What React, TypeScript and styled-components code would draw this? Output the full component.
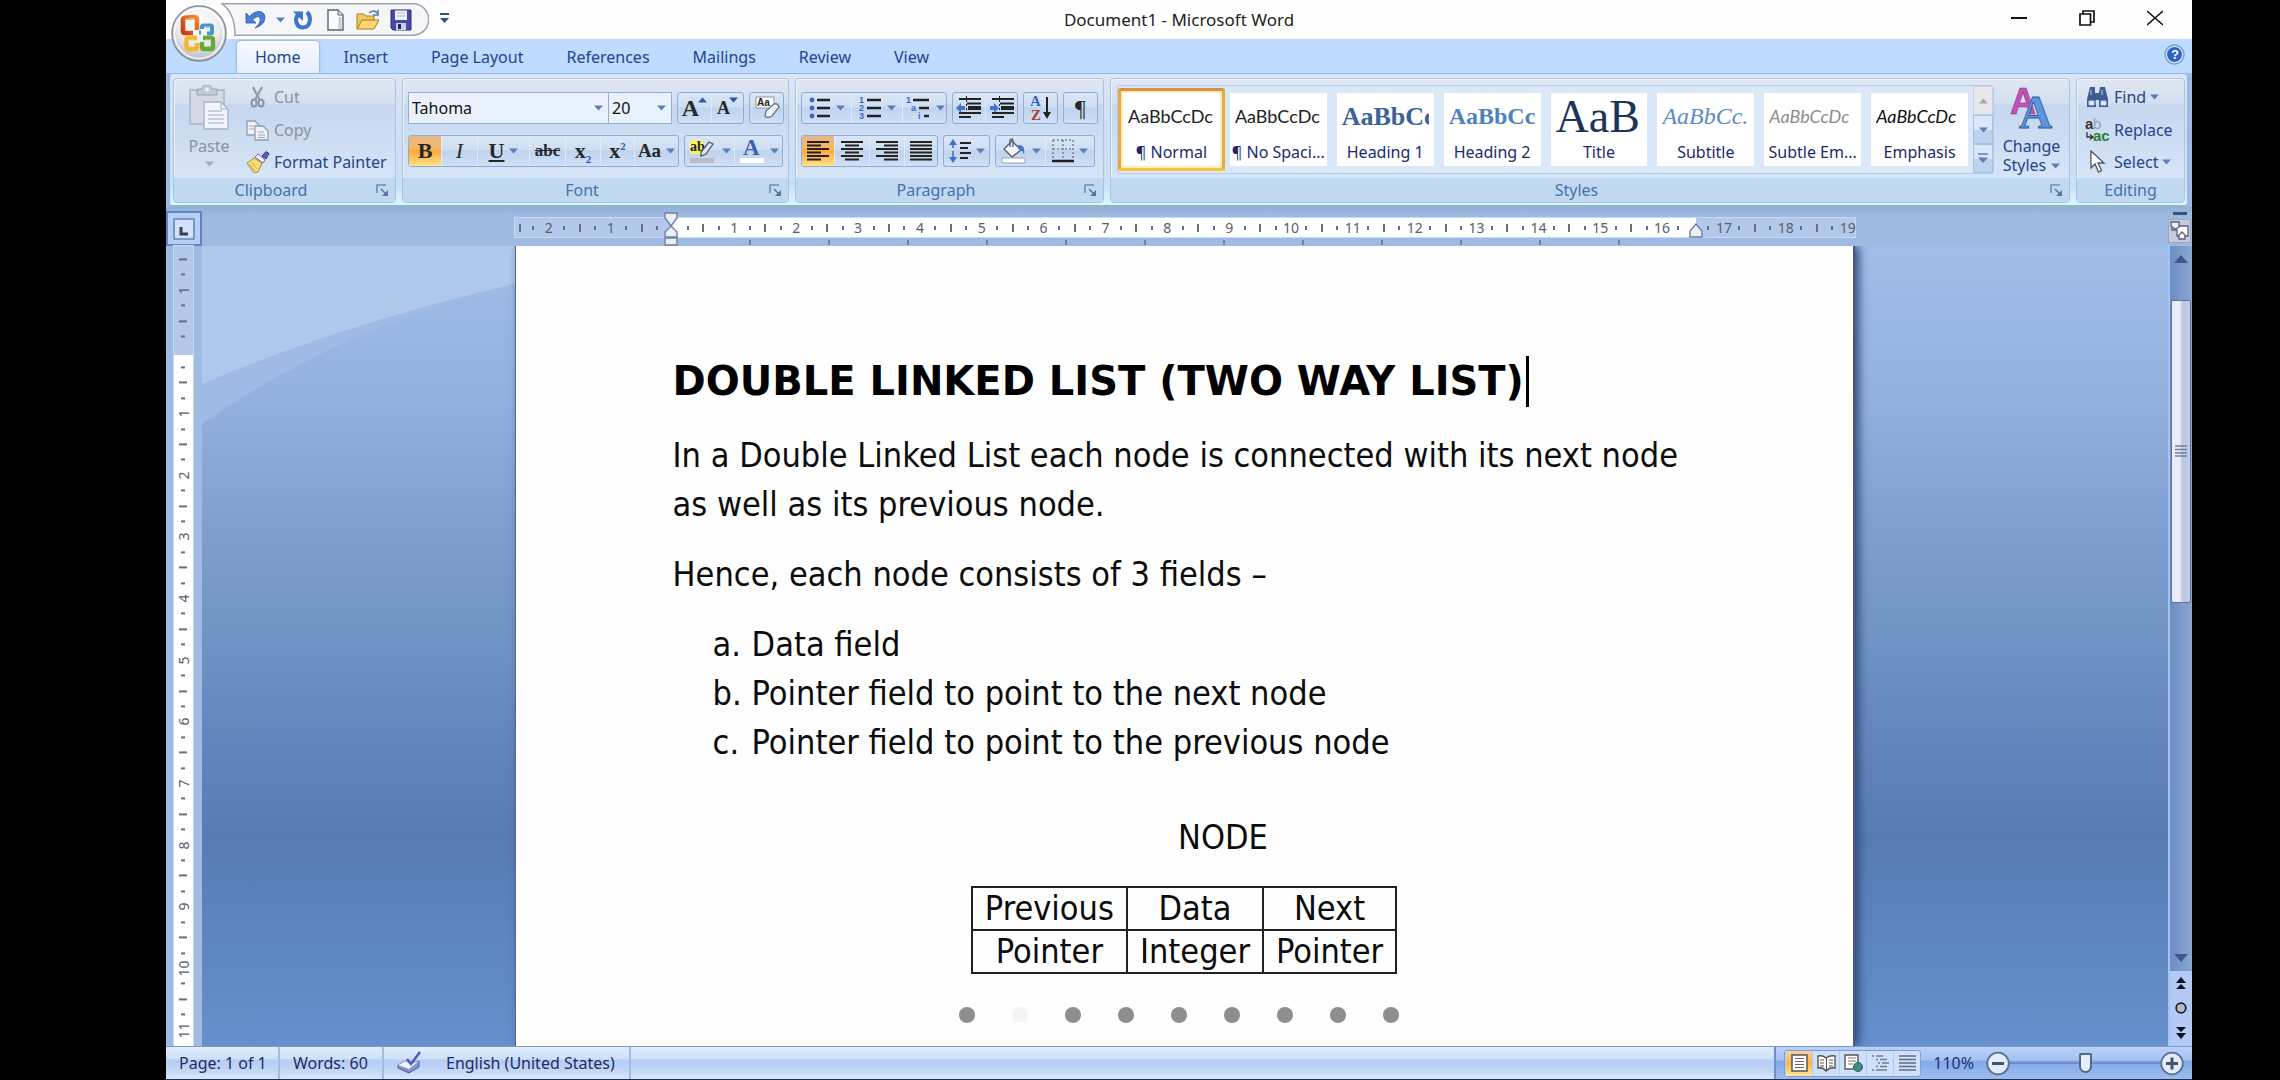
import React from "react";
import styled, { createGlobalStyle, css } from "styled-components";

const ui = `"Noto Sans", "Open Sans", sans-serif`;
const doc = `"DejaVu Sans Condensed", "DejaVu Sans", sans-serif`;
const serif = `"Liberation Serif", serif`;
const navy = "#23458c";
const line = "#8fadd6";

const GlobalStyle = createGlobalStyle`
  * { box-sizing: border-box; }
  body { margin: 0; background: #000; font-family: ${ui}; font-size: 16px; color: ${navy}; }
  button, select { font: inherit; color: inherit; background: none; border: 0; padding: 0; margin: 0; }
  svg { display: block; flex: none; }
`;

const AppWindow = styled.div`
  height: 100vh;
  margin: 0 88px 0 166px;
  display: flex;
  flex-direction: column;
  background: #9fbbe3;
  border-bottom: 1px solid #1d2f52;
  overflow: hidden;
`;

/* ---------- title bar and tabs ---------- */
const TitleBar = styled.header`
  position: relative;
  height: 39px;
  flex: none;
  display: grid;
  grid-template-columns: 1fr auto 1fr;
  background: #fefefe;
`;
const QuickArea = styled.div`
  display: flex;
  align-items: flex-start;
  padding: 3px 0 0 55px;
`;
const QuickBar = styled.div`
  position: relative;
  display: flex;
  align-items: center;
  width: 208px;
  height: 33px;
  padding-left: 24px;
`;
const QuickShape = styled.svg`
  position: absolute;
  left: 0;
  top: 0;
`;
const QuickButton = styled.button<{ $w: number }>`
  position: relative;
  width: ${(p) => p.$w}px;
  height: 28px;
  display: flex;
  align-items: center;
`;
const QuickMore = styled.button`
  padding: 10px 11px;
`;
const Title = styled.h1`
  margin: 0;
  font-size: 17px;
  font-weight: 400;
  line-height: 40px;
  color: #222;
`;
const Controls = styled.div`
  display: flex;
  justify-content: flex-end;
  padding-right: 3px;
`;
const ControlButton = styled.button`
  width: 68px;
  height: 36px;
  display: flex;
  align-items: center;
  justify-content: center;
`;
const OfficeButton = styled.button`
  position: absolute;
  left: 5px;
  top: 5px;
  z-index: 2;
`;
const TabStrip = styled.nav`
  flex: none;
  height: 34px;
  display: flex;
  align-items: flex-end;
  gap: 5px;
  padding-left: 70px;
  padding-right: 7px;
  background: #bfdbff;
`;
const Tab = styled.button<{ $active?: boolean }>`
  height: 33px;
  padding: 0 18px;
  line-height: 32px;
  border: 1px solid transparent;
  border-bottom: 0;
  border-radius: 5px 5px 0 0;
  ${(p) =>
    p.$active &&
    css`
      background: linear-gradient(#f8fbff, #e3edfa);
      border-color: #9dc0ea;
      box-shadow: 0 0 3px #8ec8e8;
    `}
`;
const HelpButton = styled.button`
  margin: 0 0 8px auto;
`;

/* ---------- ribbon ---------- */
const Ribbon = styled.section`
  flex: none;
  height: 134px;
  margin: 0 4px 0 3px;
  padding: 4px 2px 2px 3px;
  display: flex;
  gap: 6px;
  border: 1px solid #93b8e4;
  border-bottom: 2px solid #8fb6c6;
  border-radius: 4px;
  background: linear-gradient(#dbe6f5, #cfdff3 40%, #cbe0f6 85%, #dcf7ff);
`;
const Group = styled.section<{ $w?: number }>`
  ${(p) => (p.$w ? `width: ${p.$w}px; flex: none;` : "flex: 1; min-width: 0;")}
  display: flex;
  flex-direction: column;
  border: 1px solid #a9c3e2;
  border-radius: 4px;
  overflow: hidden;
  background: linear-gradient(#dfe7f3, #d3dff0 20%, #c6d7ee 21%, #d6e4f6 80%);
  box-shadow: inset 1px 1px 0 #eef4fb;
`;
const GroupBody = styled.div`
  flex: 1;
  min-height: 0;
  display: flex;
`;
const GroupFooter = styled.footer<{ $launcher: boolean }>`
  height: 24px;
  display: flex;
  align-items: center;
  padding-right: ${(p) => (p.$launcher ? 6 : 0)}px;
  background: #c1d8f1;
  color: #4a6fab;
`;
const GroupName = styled.span<{ $launcher: boolean }>`
  flex: 1;
  padding-right: ${(p) => (p.$launcher ? 8 : 0)}px;
  text-align: center;
  line-height: 24px;
`;
const PasteButton = styled.button`
  width: 70px;
  padding-top: 6px;
  display: flex;
  flex-direction: column;
  align-items: center;
  gap: 3px;
  color: #8d929b;
  line-height: 24px;
`;
const Stack = styled.div<{ $inset: number }>`
  padding: 2px 0 0 ${(p) => p.$inset}px;
  display: flex;
  flex-direction: column;
`;
const RowButton = styled.button<{ $off?: boolean }>`
  height: 32px;
  display: flex;
  align-items: center;
  gap: 4px;
  white-space: nowrap;
  color: ${(p) => (p.$off ? "#8d929b" : navy)};
  & + & { margin-top: 1px; }
`;
const Tools = styled.div`
  padding: 13px 0 0 5px;
  display: flex;
  flex-direction: column;
  gap: 11px;
`;
const ToolRow = styled.div`
  display: flex;
  gap: 5px;
`;
const ToolSet = styled.div`
  display: flex;
  height: 32px;
  border: 1px solid ${line};
  border-radius: 3px;
  background: linear-gradient(#dae6f6, #cfdef3 45%, #bfd3ee 50%, #cfe0f6);
`;
const Tool = styled.button<{ $w: number; $on?: boolean }>`
  width: ${(p) => p.$w}px;
  display: flex;
  align-items: center;
  justify-content: center;
  gap: 5px;
  color: #222;
  border-left: 1px solid #dfeafa;
  &:first-child { border-left: 0; }
  ${(p) => p.$on && "background: linear-gradient(#e9b58a, #f8b765 40%, #fca93d 50%, #ffe28a);"}
`;
const Glyph = styled.span<{ $size?: number; $color?: string; $italic?: boolean; $bold?: boolean; $line?: string }>`
  font-family: ${serif};
  font-size: ${(p) => p.$size ?? 22}px;
  line-height: 28px;
  font-weight: ${(p) => (p.$bold === false ? 400 : 700)};
  font-style: ${(p) => (p.$italic ? "italic" : "normal")};
  text-decoration: ${(p) => p.$line ?? "none"};
  color: ${(p) => p.$color ?? "#26282c"};
  sub, sup { font-size: 11px; line-height: 0; color: #2f57b0; }
`;
const Combo = styled.label<{ $w: number }>`
  position: relative;
  width: ${(p) => p.$w}px;
  height: 32px;
  & + & { margin-left: -6px; }
  svg { position: absolute; right: 6px; top: 13px; pointer-events: none; }
`;
const ComboSelect = styled.select`
  appearance: none;
  width: 100%;
  height: 100%;
  padding-left: 3px;
  border: 1px solid ${line};
  background: #e9f1fc;
  color: #111;
`;

/* ---------- styles gallery ---------- */
const Gallery = styled.div`
  flex: 1;
  min-width: 0;
  height: 89px;
  margin: 6px 0 0 6px;
  display: flex;
  border: 1px solid #b5cdea;
  border-radius: 3px;
  background: #dbe8f8;
`;
const StyleItem = styled.button<{ $on?: boolean }>`
  flex: 1;
  min-width: 0;
  height: 83px;
  margin-top: 2px;
  padding: 2px;
  border: 3px solid transparent;
  border-radius: 3px;
  ${(p) =>
    p.$on &&
    css`
      border-color: #d9923f #e9a93f #f6c53f #e9a93f;
      background: #ffedb5;
    `}
`;
const StyleCard = styled.span`
  display: flex;
  flex-direction: column;
  height: 100%;
  background: #fff;
  overflow: hidden;
`;
const Sample = styled.span<{ $size: number; $color: string; $serif?: boolean; $bold?: boolean; $italic?: boolean }>`
  height: 47px;
  margin: 0 5px;
  display: flex;
  align-items: center;
  line-height: 47px;
  overflow: hidden;
  white-space: nowrap;
  font-family: ${(p) => (p.$serif ? serif : `Lato, sans-serif`)};
  font-size: ${(p) => p.$size}px;
  font-weight: ${(p) => (p.$bold ? 700 : 400)};
  font-style: ${(p) => (p.$italic ? "italic" : "normal")};
  color: ${(p) => p.$color};
`;
const StyleName = styled.span`
  line-height: 24px;
  text-align: center;
  white-space: nowrap;
  color: #1b2a6b;
`;
const GalleryScroll = styled.div`
  width: 20px;
  display: flex;
  flex-direction: column;
`;
const GalleryArrow = styled.button<{ $off?: boolean }>`
  flex: 1;
  display: flex;
  align-items: center;
  justify-content: center;
  border: 1px solid ${(p) => (p.$off ? "#c9d3e2" : "#a8c2e6")};
  background: ${(p) => (p.$off ? "#e6e8ec" : "linear-gradient(#d9e7f9 50%, #bdd2ef 52%)")};
`;
const ChangeStyles = styled.button`
  width: 75px;
  padding-top: 6px;
  display: flex;
  flex-direction: column;
  align-items: center;
  line-height: 19px;
  svg:first-child { margin-bottom: 8px; }
`;
const Inline = styled.span`
  display: inline-flex;
  align-items: center;
  gap: 5px;
  svg:last-child { margin-bottom: 0; }
`;

/* ---------- rulers ---------- */
const RulerRow = styled.div`
  flex: none;
  height: 39px;
  display: flex;
  background: linear-gradient(#93b0da, #a0bbe2 25%);
`;
const TabSelector = styled.button`
  width: 36px;
  height: 35px;
  margin-top: 4px;
  display: flex;
  align-items: center;
  justify-content: center;
  border: 2px solid #5f84c8;
  background: #b9cff2;
`;
const RulerTrack = styled.div`
  flex: 1;
  display: flex;
  flex-direction: column;
  align-items: center;
  padding-top: 11px;
`;
const HRuler = styled.div`
  position: relative;
  width: 68.2%;
  height: 19px;
  display: grid;
  grid-template-columns: 11px repeat(86, minmax(0, 1fr));
  background: linear-gradient(90deg, #b3c8ea 11.7%, #fff 11.7%, #fff 88.1%, #b3c8ea 88.1%);
  box-shadow: 0 0 0 1px #c8d9f3;
`;
const VRuler = styled.div`
  width: 19px;
  margin-left: 8px;
  display: grid;
  grid-template-rows: 6px repeat(51, minmax(0, 1fr)) 8px;
  background: linear-gradient(#b3c8ea 109px, #fff 109px);
  box-shadow: 0 0 0 1px #c8d9f3;
`;
const VRulerPane = styled.div`
  width: 36px;
  display: flex;
  background: #a0bbe2;
`;
const Mark = styled.span<{ $vertical?: boolean }>`
  display: flex;
  align-items: center;
  justify-content: center;
  font-size: 14px;
  line-height: 15px;
  color: #55606f;
  writing-mode: ${(p) => (p.$vertical ? "vertical-rl" : "horizontal-tb")};
  rotate: ${(p) => (p.$vertical ? "180deg" : "0deg")};
`;
const Tick = styled.i<{ $long?: boolean; $vertical?: boolean }>`
  width: ${(p) => (p.$vertical && p.$long ? 8 : p.$vertical ? 4 : 2)}px;
  height: ${(p) => (p.$vertical ? 2 : p.$long ? 8 : 4)}px;
  background: #66707e;
`;
const Indent = styled.svg<{ $at: string; $top: number }>`
  position: absolute;
  left: ${(p) => p.$at};
  top: ${(p) => p.$top}px;
  margin-left: -7px;
`;
const TabTicks = styled.div`
  width: 68.2%;
  height: 9px;
  padding: 3px 0 0 234px;
  overflow: hidden;
  display: flex;
  gap: 77px;
  i { flex: none; width: 2px; height: 5px; background: #6f83a6; }
`;
const ScrollHead = styled.div`
  width: 24px;
  padding: 5px 1px 3px 0;
  display: flex;
  flex-direction: column;
  align-items: center;
  gap: 4px;
`;
const SplitHandle = styled.i`
  width: 14px;
  height: 3px;
  background: #3d4f78;
`;
const RulerToggle = styled.button`
  width: 23px;
  height: 24px;
  display: flex;
  align-items: center;
  justify-content: center;
  background: #c5cbdc;
  border: 1px solid #9aa7c4;
`;

/* ---------- workspace ---------- */
const Workspace = styled.div`
  flex: 1;
  min-height: 0;
  display: flex;
`;
const Canvas = styled.main`
  position: relative;
  flex: 1;
  display: flex;
  justify-content: center;
  overflow: hidden;
  background: linear-gradient(#a1bee8, #91b0df 20%, #7f9fd0 35%, #6f93c4 50%, #6385bc 62%, #587cb2 74%, #5b82bc 82%, #6690cc);
`;
const Swoosh = styled.svg`
  position: absolute;
  left: 0;
  top: 0;
`;
const Page = styled.article`
  position: relative;
  width: 68.2%;
  padding: 110px 158px 0 157px;
  background: #fefefe;
  border-left: 1px solid #5a6a86;
  border-right: 2px solid #4a5a76;
  box-shadow: 4px 0 9px #2f4a7a;
  color: #0c0c0c;
  font-family: ${doc};
  font-size: 34px;
  line-height: 49px;
  overflow-wrap: break-word;
`;
const DocHeading = styled.h2`
  display: flex;
  margin: 0 0 24px;
  font-family: "DejaVu Sans", sans-serif;
  font-size: 40px;
  line-height: 51px;
  font-weight: 700;
  white-space: nowrap;
  color: #000;
  &::after { content: ""; width: 3px; margin-left: 2px; background: #000; }
`;
const Para = styled.p`
  margin: 0 0 21px;
`;
const Fields = styled.ol`
  margin: 0 0 46px;
  padding: 0 0 0 40px;
  list-style: none;
  counter-reset: f;
  li { display: flex; counter-increment: f; }
  li::before { content: counter(f, lower-alpha) "."; width: 39px; }
`;
const NodeTitle = styled.p`
  margin: 0 0 24px;
  padding-left: 78px;
  text-align: center;
`;
const NodeTable = styled.table`
  margin: 0 auto 33px;
  border-collapse: collapse;
  td { height: 43px; padding: 0 12px; border: 2px solid #222; line-height: 41px; text-align: center; }
`;
const Dots = styled.div`
  display: flex;
  justify-content: center;
  gap: 37px;
  padding-right: 9px;
`;
const Dot = styled.i<{ $faint?: boolean }>`
  width: 16px;
  height: 16px;
  border-radius: 50%;
  background: ${(p) => (p.$faint ? "#f4f4f4" : "#8e8e8e")};
`;
const ScrollPane = styled.div`
  width: 24px;
  display: flex;
  flex-direction: column;
  align-items: center;
  border-left: 2px solid #a9c3ec;
  background: linear-gradient(90deg, #6b8ec6, #8ba5d0);
`;
const ScrollArrow = styled.button`
  height: 26px;
`;
const ScrollBefore = styled.div`
  flex: 28;
`;
const ScrollAfter = styled.div`
  flex: 343;
`;
const ScrollThumb = styled.div`
  flex: 301;
  width: 20px;
  display: flex;
  align-items: center;
  justify-content: center;
  border: 1px solid #5c739f;
  border-radius: 2px;
  background: linear-gradient(90deg, #e9edf8 45%, #bcc9e0 55%, #c5cbe2);
`;
const BrowseButtons = styled.div`
  width: 100%;
  height: 75px;
  display: flex;
  flex-direction: column;
  align-items: center;
  justify-content: space-around;
  background: #b4c9f5;
`;

/* ---------- status bar ---------- */
const StatusBar = styled.footer`
  flex: none;
  height: 33px;
  display: flex;
  border-top: 1px solid #7f98c6;
  background: linear-gradient(#e2edfd, #cfe0fb 36%, #b4cdf4 42%, #c3d8f8 75%, #d8e8fd);
  color: #1d2c5e;
`;
const StatusItem = styled.button<{ $w: number }>`
  width: ${(p) => p.$w}px;
  display: flex;
  align-items: center;
  padding-left: 13px;
  gap: 24px;
  border-right: 2px solid #a5bbe0;
  line-height: 28px;
`;
const StatusRight = styled.div`
  margin-left: auto;
  padding: 0 8px;
  display: flex;
  align-items: center;
  border-left: 2px solid #6d8fcb;
  background: linear-gradient(#b9d1f8, #a5c2f2 40%, #83a9e6 45%, #9dbdf0);
`;
const Views = styled.div`
  display: flex;
  height: 27px;
  border: 1px solid #7d9ed8;
  border-radius: 3px;
  background: #cfe0fa;
`;
const View = styled.button<{ $on?: boolean }>`
  width: 27px;
  display: flex;
  align-items: center;
  justify-content: center;
  border-left: 1px solid #b5cbee;
  ${(p) => p.$on && "background: linear-gradient(#f3d3a0, #fbb54b 50%, #ffe79c);"}
`;
const ZoomText = styled.button`
  margin: 0 12px;
  color: #1d3278;
`;
const ZoomSlider = styled.input`
  appearance: none;
  width: 150px;
  height: 24px;
  margin: 0;
  background: linear-gradient(#6c8dc9, #6c8dc9) center / 100% 2px no-repeat;
  &::-webkit-slider-thumb {
    appearance: none;
    width: 13px;
    height: 20px;
    background: #e4edfb;
    border: 2px solid #54688f;
    border-radius: 2px 2px 7px 7px;
  }
`;

/* ---------- drawings ---------- */
const Caret = ({ c = "#5b7fb8", up = false }: { c?: string; up?: boolean }) => (
  <svg width="9" height="6" viewBox="0 0 9 6"><path d={up ? "M0 5.5h9L4.500 .5z" : "M0 .5h9L4.500 5.500z"} fill={c} /></svg>
);
const Launcher = () => (
  <svg width="13" height="13" viewBox="0 0 13 13"><path d="M1 9V1h9" fill="none" stroke="#6d8bb8" strokeWidth="1.6" /><path d="M12 6v6H6z" fill="#56749f" /><path d="M5 5l5 5" stroke="#56749f" strokeWidth="1.500" /></svg>
);
const OfficeLogo = () => (
  <svg width="56" height="57" viewBox="0 0 56 57">
    <defs>
      <radialGradient id="orb" cx=".5" cy=".3" r=".75"><stop offset="0" stopColor="#fff" /><stop offset=".55" stopColor="#e9eaec" /><stop offset="1" stopColor="#a9afb8" /></radialGradient>
      <linearGradient id="red" x1="0" y1="1" x2="1" y2="0"><stop offset="0" stopColor="#c33a14" /><stop offset="1" stopColor="#f08a2c" /></linearGradient>
    </defs>
    <ellipse cx="28" cy="28.500" rx="27" ry="27.500" fill="url(#orb)" stroke="#878d97" strokeWidth="1.500" />
    <ellipse cx="28" cy="28.500" rx="24.500" ry="25" fill="none" stroke="#fff" strokeWidth="1.600" opacity=".8" />
    <g fill="none">
      <path d="M22 28H14q-2 0-2-2V15q0-2 2-2.300L23 12q3 0 3 2.500V25" stroke="url(#red)" strokeWidth="4.600" />
      <path d="M28 27.500h2M31 24v-2q0-1.500 1.500-1.500h7q1.500 0 1.500 1.500v5q0 1.500-1.500 1.500H36" stroke="#4796cf" strokeWidth="4" />
      <path d="M26 33h-8.500q-2 0-2 2v7q0 2 2 2H24q2 0 2-2v-4" stroke="#f3b72b" strokeWidth="4.400" />
      <path d="M31 37v5q0 2 2 2h7q2 0 2-2v-7q0-2-2-2h-8" stroke="#67a934" strokeWidth="4.400" />
    </g>
    <path d="M14 14.500l9-1.500M17 35h6M33 22h6M34 35h6" stroke="#fff" strokeWidth="1" opacity=".55" />
  </svg>
);
const Undo = () => (
  <svg width="22" height="22" viewBox="0 0 22 22"><path d="M1 4v10h10l-3.500-3.500Q13 5.500 15 9q1.500 4.500-5 10Q20 16 20 8q-1-6-7-5.500Q8 3 4.500 7.500z" fill="#4a7fd6" stroke="#2a56ac" strokeWidth=".8" /></svg>
);
const Redo = () => (
  <svg width="20" height="22" viewBox="0 0 20 22"><path d="M14 3q3 3 3 7.500Q16.500 18.500 10 18.500T3 11q0-4 3.500-7" fill="none" stroke="#3f74cf" strokeWidth="4" /><path d="M0 2.500h10V12z" fill="#3f74cf" /></svg>
);
const NewDoc = () => (
  <svg width="17" height="22" viewBox="0 0 17 22"><path d="M1 1h10l5 5v15H1z" fill="#fff" stroke="#5b6578" strokeWidth="1.400" /><path d="M11 1v5h5" fill="#d5dae4" stroke="#5b6578" /><path d="M13 8v12" stroke="#c5cad6" strokeWidth="3" /></svg>
);
const OpenFolder = () => (
  <svg width="25" height="22" viewBox="0 0 25 22"><path d="M1 20V5h7l2 2h8v4" fill="#f0c860" stroke="#a67a25" /><path d="M1 20L6 11h17l-5 9z" fill="#fbd671" stroke="#a67a25" /><path d="M13 4q5-4 8 0M22 1v5h-5" fill="none" stroke="#5a76ab" strokeWidth="1.600" /></svg>
);
const Save = () => (
  <svg width="22" height="22" viewBox="0 0 22 22"><path d="M1 1h20v20H3l-2-2z" fill="#4a49a6" stroke="#2d2c77" /><path d="M5 1.500h12V11H5z" fill="#eff2fb" /><path d="M6 14h10v7H6z" fill="#c9cfe6" /><path d="M8 15h3v5H8z" fill="#26265e" /><path d="M7 4h8M7 7h8" stroke="#b0b8d4" /></svg>
);
const PasteIcon = () => (
  <svg width="42" height="46" viewBox="0 0 42 46"><path d="M2 5h34v34H2z" fill="#d3dae6" stroke="#a9b5c8" strokeWidth="1.500" /><path d="M9 4h5q0-4 5-4t5 4h5v6H9z" fill="#c0cad9" stroke="#97a5bb" /><circle cx="19" cy="4.500" r="2" fill="#eef1f6" /><path d="M16 17h17l7 7v20H16z" fill="#f1f4fa" stroke="#a5b1c6" strokeWidth="1.300" /><path d="M33 17v7h7M20 26h14M20 30h16M20 34h16M20 38h16" fill="none" stroke="#b6c2d5" strokeWidth="1.300" /></svg>
);
const CutIcon = () => (
  <svg width="24" height="22" viewBox="0 0 24 22"><path d="M7 1l6.500 13M16 1L9 14" stroke="#929baa" strokeWidth="2.200" /><ellipse cx="8" cy="17" rx="2.500" ry="3.500" fill="none" stroke="#8b94a5" strokeWidth="2" /><ellipse cx="15" cy="17" rx="2.500" ry="3.500" fill="none" stroke="#8b94a5" strokeWidth="2" /></svg>
);
const CopyIcon = () => (
  <svg width="24" height="22" viewBox="0 0 24 22"><g fill="#eef1f7" stroke="#939cae" strokeWidth="1.300"><path d="M1 2h8l4 4v10H1z" /><path d="M9 7h8l5 5v9H9z" /></g><path d="M3 7h5M3 10h5M12 13h6M12 16h7M12 18.500h7" stroke="#9fa8ba" /></svg>
);
const PainterIcon = () => (
  <svg width="24" height="22" viewBox="0 0 24 22"><path d="M1 12l7-5 8 5-4 9-4 1z" fill="#f5dc7d" stroke="#a98b35" /><path d="M3 13l6 7M6 11l5 7" stroke="#cfae4b" /><path d="M9 6l8 6 2-3-7-6z" fill="#f7f7fb" stroke="#6d6f8a" /><path d="M16 5l4-4.500 3 2-3 5.500z" fill="#5462b4" stroke="#343d84" /></svg>
);
const Clear = () => (
  <svg width="26" height="26" viewBox="0 0 26 26"><path d="M2 2h18v11H2z" fill="#fff" stroke="#8793a8" /><text x="3" y="11" fontSize="10" fontWeight="700" fontFamily="Liberation Sans" fill="#222">Aa</text><path d="M12 16l8-7q4-1 5 3l-7 9q-5 3-7 0z" fill="#f0f2f8" stroke="#6f7a90" strokeWidth="1.400" /></svg>
);
const SmallCaret = styled.span`
  align-self: flex-start;
  margin: 3px 0 0 -6px;
`;
const GrowA = ({ up }: { up: boolean }) => (
  <Inline>
    <Glyph $size={up ? 24 : 18}>A</Glyph>
    <SmallCaret><Caret c="#2f57a8" up={up} /></SmallCaret>
  </Inline>
);
const Highlight = () => (
  <svg width="28" height="28" viewBox="0 0 28 28"><path d="M1 3h13v14H1z" fill="#f7f36a" /><text x="1" y="14" fontSize="14" fontWeight="700" fontFamily="Liberation Serif" fill="#222">ab</text><path d="M12 15L20 5l4 2-7 10-5 2z" fill="#dce3f0" stroke="#4d5768" strokeWidth="1.300" /><path d="M1 21h24v5H1z" fill="#b9bcc3" /></svg>
);
const FontColor = () => (
  <svg width="26" height="28" viewBox="0 0 26 28"><text x="4" y="18" fontSize="23" fontWeight="700" fontFamily="Liberation Serif" fill="#3c62aa">A</text><path d="M1 21h24v5H1z" fill="#fff" /></svg>
);
const Bullets = () => (
  <svg width="22" height="22" viewBox="0 0 22 22"><g fill="#3f66bd"><circle cx="3" cy="3" r="2.400" /><circle cx="3" cy="11" r="2.400" /><circle cx="3" cy="19" r="2.400" /></g><path d="M8 3h13M8 11h13M8 19h13" stroke="#222" strokeWidth="2.400" /></svg>
);
const Numbers = () => (
  <svg width="23" height="24" viewBox="0 0 23 24"><g fontSize="9" fontWeight="700" fontFamily="Liberation Sans" fill="#3f66bd"><text x="0" y="7">1</text><text x="0" y="15">2</text><text x="0" y="23">3</text></g><path d="M8 4h14M8 12h14M8 20h14" stroke="#222" strokeWidth="2.400" /></svg>
);
const Multi = () => (
  <svg width="26" height="24" viewBox="0 0 26 24"><g fontSize="9" fontWeight="700" fontFamily="Liberation Sans" fill="#3f66bd"><text x="1" y="7">1</text><text x="6" y="15">a</text><text x="13" y="23">i</text></g><path d="M8 4h16M14 12h10M19 20h5" stroke="#222" strokeWidth="2.400" /></svg>
);
const IndentIcon = ({ more }: { more?: boolean }) => (
  <svg width="26" height="24" viewBox="0 0 26 24"><path d="M3 3h22M11 7.500h14M3 17h22M3 21h12" stroke="#222" strokeWidth="2" /><path d="M12 10h13v4H12z" fill="#222" /><path d="M10.500 0v24" stroke="#222" strokeDasharray="2 2" /><path d={more ? "M1 10h4V7l5 5-5 5v-3H1z" : "M9 10H5V7l-5 5 5 5v-3h4z"} fill="#4474cf" /></svg>
);
const Sort = () => (
  <svg width="24" height="28" viewBox="0 0 24 28"><g fontSize="15" fontWeight="700" fontFamily="Liberation Serif"><text x="1" y="12" fill="#3f66bd">A</text><text x="2" y="26" fill="#b1372f">Z</text></g><path d="M18 3v18" stroke="#222" strokeWidth="2" /><path d="M14 18h8l-4 7z" fill="#222" /></svg>
);
const Align = ({ kind }: { kind: "l" | "c" | "r" | "j" }) => (
  <svg width="22" height="20" viewBox="0 0 22 20">
    {[22, 14, 22, 14, 22, 14].map((w, i) => {
      const n = kind === "j" ? 22 : w;
      const x = kind === "c" ? (22 - n) / 2 : kind === "r" ? 22 - n : 0;
      return <path key={i} d={`M${x} ${i * 3.5 + 1}h${n}`} stroke="#26231f" strokeWidth="2" />;
    })}
  </svg>
);
const Spacing = () => (
  <svg width="22" height="26" viewBox="0 0 22 26"><path d="M4 4v18" stroke="#3f6fcc" strokeWidth="1.600" strokeDasharray="6 3" /><path d="M0 7l4-6 4 6zM0 19l4 6 4-6z" fill="#3f6fcc" /><path d="M11 5h11M11 10h8M11 15h11M11 20h8" stroke="#222" strokeWidth="2" /></svg>
);
const Bucket = () => (
  <svg width="26" height="26" viewBox="0 0 26 26"><path d="M11 3l9 9-9 7-8-8z" fill="#f3f6fc" stroke="#555f73" strokeWidth="1.400" /><path d="M9 9V2q2-2 3 0v7" fill="none" stroke="#555f73" strokeWidth="1.300" /><path d="M17 7q8-1 6 10-1-5-5-5z" fill="#4474cf" /><path d="M1 20h23v5H1z" fill="#fff" stroke="#99a2b2" /></svg>
);
const Borders = () => (
  <svg width="22" height="24" viewBox="0 0 22 24"><path d="M1 1h20v18M1 1v18M11 1v18M1 10h20" fill="none" stroke="#7b8698" strokeWidth="1.600" strokeDasharray="2 2" /><path d="M0 22h22" stroke="#1f1f1f" strokeWidth="2.400" /></svg>
);
const ChangeIcon = () => (
  <svg width="44" height="44" viewBox="0 0 44 44"><text x="0" y="29" fontSize="36" fontWeight="700" fontFamily="Liberation Sans" fill="#c152b6" stroke="#8c2f86" strokeWidth=".6">A</text><text x="9" y="43" fontSize="46" fontWeight="700" fontFamily="Liberation Serif" fill="#5f95dc" stroke="#2f5aa4" strokeWidth=".8">A</text></svg>
);
const FindIcon = () => (
  <svg width="25" height="22" viewBox="0 0 25 22"><g fill="#3f5b93"><path d="M5 1h5v6l1 14H2V13zM15 1h5l3 12v8h-9V7z" /><path d="M10 7h5v7h-5z" /></g><path d="M4 15h5v4H4zM16 15h5v4h-5zM6 4v5M17 4v5" fill="#e3ecfb" stroke="#c3d2ec" /></svg>
);
const ReplaceIcon = () => (
  <svg width="25" height="26" viewBox="0 0 25 26"><g fontSize="15" fontWeight="700" fontFamily="Liberation Sans"><text x="0" y="12" fill="#333">a</text><text x="8" y="12" fill="#9aa1ac" fontWeight="400">b</text><text x="8" y="24" fill="#2e7d2e">ac</text></g><path d="M2 15v5h5M5 17.500l3 2.500-3 2.500" fill="none" stroke="#333" strokeWidth="1.300" /></svg>
);
const SelectIcon = () => (
  <svg width="25" height="24" viewBox="0 0 25 24"><path d="M6 1v17l4-4 3.500 8 3-1.500L13 13h6z" fill="#fff" stroke="#4c5465" strokeWidth="1.300" /></svg>
);
const Proof = () => (
  <svg width="25" height="24" viewBox="0 0 25 24"><path d="M1 14l8-4 4 3 9-3v6l-10 6L1 17z" fill="#8292c8" stroke="#4d5a94" /><path d="M1 14l8-4 4 3 9-3-10 8z" fill="#eef2fc" /><path d="M10 8l4 5 9-12" fill="none" stroke="#4a62b8" strokeWidth="2.600" /></svg>
);
const ViewIcon = ({ i }: { i: number }) => (
  <svg width="19" height="18" viewBox="0 0 19 18">
    {i === 0 && <><path d="M2 1h15v16H2z" fill="#fff" stroke="#555" strokeWidth="1.500" /><path d="M5 4.500h9M5 7.500h9M5 10.500h9M5 13.500h9" stroke="#666" /></>}
    {i === 1 && <><path d="M1 2q5-1 8 2 4-3 9-2v12q-5-1-9 3-3-4-8-3z" fill="#fff" stroke="#555" strokeWidth="1.400" /><path d="M9.500 4v12M3 6h4M3 9h4M12 6h4M12 9h4M3 12h4M12 12h4" stroke="#555" /></>}
    {i === 2 && <><path d="M1 1h13v14H1z" fill="#fff" stroke="#555" strokeWidth="1.400" /><path d="M4 4h8M4 7h8M4 10h5" stroke="#777" /><circle cx="14" cy="13" r="4.500" fill="#3c8f7d" stroke="#2a5a86" /></>}
    {i === 3 && <path d="M1 2h2M5 2h7M5 5.500h2M9 5.500h7M7 9h2M11 9h7M5 12.500h2M9 12.500h7M1 16h2M5 16h11" stroke="#737b8a" strokeWidth="1.700" />}
    {i === 4 && <path d="M1 2h17M1 5.500h17M1 9h17M1 12.500h17M1 16h17" stroke="#646c7c" strokeWidth="1.700" />}
  </svg>
);
const ZoomIcon = ({ plus }: { plus?: boolean }) => (
  <svg width="24" height="25" viewBox="0 0 24 25"><circle cx="12" cy="12.500" r="10.800" fill="#e3ecfa" stroke="#5d6f93" strokeWidth="1.800" /><path d={plus ? "M6 12.500h12M12 6.500v12" : "M6 12.500h12"} stroke="#46536f" strokeWidth="3" /></svg>
);
const PageJump = ({ down }: { down?: boolean }) => (
  <svg width="10" height="12" viewBox="0 0 10 12"><path d={down ? "M0 0h10L5 5zM0 6h10l-5 6z" : "M0 6h10L5 0zM0 12h10L5 7z"} fill="#0c1220" /></svg>
);

const styleItems = [
  { t: "AaBbCcDc", n: "¶ Normal", size: 18, color: "#222" },
  { t: "AaBbCcDc", n: "¶ No Spaci...", size: 18, color: "#222" },
  { t: "AaBbCc", n: "Heading 1", size: 26, color: "#3a6496", serif: true, bold: true },
  { t: "AaBbCc", n: "Heading 2", size: 24, color: "#4f81bd", serif: true, bold: true },
  { t: "AaB", n: "Title", size: 46, color: "#1c3557", serif: true },
  { t: "AaBbCc.", n: "Subtitle", size: 24, color: "#5b8ac4", serif: true, italic: true },
  { t: "AaBbCcDc", n: "Subtle Em...", size: 18, color: "#8c8c8c", italic: true },
  { t: "AaBbCcDc", n: "Emphasis", size: 18, color: "#111", italic: true },
];

const marks = (from: number, to: number, vertical?: boolean) =>
  Array.from({ length: to - from + 1 }, (_, i) => {
    const k = from + i;
    const q = ((k % 4) + 4) % 4;
    return (
      <Mark key={k} $vertical={vertical}>
        {k === 0 || (!vertical && k === 66) ? null : q === 0 ? Math.abs(k / 4) : <Tick $long={q === 2} $vertical={vertical} />}
      </Mark>
    );
  });

const Footer = ({ name, launcher = true }: { name: string; launcher?: boolean }) => (
  <GroupFooter $launcher={launcher}>
    <GroupName $launcher={launcher}>{name}</GroupName>
    {launcher && <button aria-label={`${name} options`}><Launcher /></button>}
  </GroupFooter>
);

export default function App() {
  return (
    <>
      <GlobalStyle />
      <AppWindow>
        <TitleBar>
          <OfficeButton aria-label="Office"><OfficeLogo /></OfficeButton>
          <QuickArea>
            <QuickBar>
              <QuickShape width="208" height="33" viewBox="0 0 208 33">
                <path d="M1 .8h191a15.500 15.500 0 0 1 0 31.400H14Q14 10 1 .8z" fill="#f5f6fa" stroke="#a0a3ab" strokeWidth="1.500" />
              </QuickShape>
              <QuickButton $w={31} aria-label="Undo"><Undo /></QuickButton>
              <QuickButton $w={17} aria-label="Undo list"><Caret /></QuickButton>
              <QuickButton $w={34} aria-label="Redo"><Redo /></QuickButton>
              <QuickButton $w={29} aria-label="New"><NewDoc /></QuickButton>
              <QuickButton $w={34} aria-label="Open"><OpenFolder /></QuickButton>
              <QuickButton $w={22} aria-label="Save"><Save /></QuickButton>
            </QuickBar>
            <QuickMore aria-label="Customize"><svg width="9" height="11" viewBox="0 0 9 11"><path d="M0 1h9" stroke="#34507f" strokeWidth="2" /><path d="M0 5h9l-4.500 5z" fill="#34507f" /></svg></QuickMore>
          </QuickArea>
          <Title>Document1 - Microsoft Word</Title>
          <Controls>
            <ControlButton aria-label="Minimize"><svg width="16" height="16" viewBox="0 0 16 16"><path d="M0 8h16" stroke="#111" strokeWidth="2" /></svg></ControlButton>
            <ControlButton aria-label="Restore"><svg width="16" height="16" viewBox="0 0 16 16"><path d="M1 4h10.500v11H1zM4 4V1h11v11h-3" fill="none" stroke="#111" strokeWidth="1.700" /></svg></ControlButton>
            <ControlButton aria-label="Close"><svg width="16" height="16" viewBox="0 0 16 16"><path d="M0 1l16 14M16 1L0 15" stroke="#111" strokeWidth="1.600" /></svg></ControlButton>
          </Controls>
        </TitleBar>
        <TabStrip>
          {["Home", "Insert", "Page Layout", "References", "Mailings", "Review", "View"].map((t, i) => (
            <Tab key={t} $active={i === 0}>{t}</Tab>
          ))}
          <HelpButton aria-label="Help">
            <svg width="21" height="21" viewBox="0 0 21 21"><circle cx="10.500" cy="10.500" r="9.500" fill="#dce9fc" stroke="#7c9cd0" strokeWidth="1.500" /><circle cx="10.500" cy="10.500" r="7.500" fill="#2f62c9" /><text x="7" y="15" fontSize="13" fontWeight="700" fontFamily="Liberation Sans" fill="#fff">?</text></svg>
          </HelpButton>
        </TabStrip>

        <Ribbon>
          <Group $w={223}>
            <GroupBody>
              <PasteButton><PasteIcon />Paste<Caret c="#a3abba" /></PasteButton>
              <Stack $inset={2}>
                <RowButton $off><CutIcon />Cut</RowButton>
                <RowButton $off><CopyIcon />Copy</RowButton>
                <RowButton><PainterIcon />Format Painter</RowButton>
              </Stack>
            </GroupBody>
            <Footer name="Clipboard" />
          </Group>

          <Group $w={387}>
            <GroupBody>
              <Tools>
                <ToolRow>
                  <Combo $w={201}><ComboSelect aria-label="Font" defaultValue="Tahoma"><option>Tahoma</option></ComboSelect><Caret /></Combo>
                  <Combo $w={64}><ComboSelect aria-label="Font size" defaultValue="20"><option>20</option></ComboSelect><Caret /></Combo>
                  <ToolSet>
                    <Tool $w={33} aria-label="Grow font"><GrowA up /></Tool>
                    <Tool $w={32} aria-label="Shrink font"><GrowA up={false} /></Tool>
                  </ToolSet>
                  <ToolSet><Tool $w={33} aria-label="Clear formatting"><Clear /></Tool></ToolSet>
                </ToolRow>
                <ToolRow>
                  <ToolSet>
                    <Tool $w={32} $on><Glyph>B</Glyph></Tool>
                    <Tool $w={36}><Glyph $italic $bold={false}>I</Glyph></Tool>
                    <Tool $w={52}><Glyph $line="underline">U</Glyph><Caret /></Tool>
                    <Tool $w={36}><Glyph $size={17} $line="line-through">abc</Glyph></Tool>
                    <Tool $w={35}><Glyph>x<sub>2</sub></Glyph></Tool>
                    <Tool $w={34}><Glyph>x<sup>2</sup></Glyph></Tool>
                    <Tool $w={44}><Glyph $size={19}>Aa</Glyph><Caret /></Tool>
                  </ToolSet>
                  <ToolSet>
                    <Tool $w={49} aria-label="Highlight"><Highlight /><Caret /></Tool>
                    <Tool $w={48} aria-label="Font color"><FontColor /><Caret /></Tool>
                  </ToolSet>
                </ToolRow>
              </Tools>
            </GroupBody>
            <Footer name="Font" />
          </Group>

          <Group $w={309}>
            <GroupBody>
              <Tools>
                <ToolRow>
                  <ToolSet>
                    <Tool $w={49} aria-label="Bullets"><Bullets /><Caret /></Tool>
                    <Tool $w={51} aria-label="Numbering"><Numbers /><Caret /></Tool>
                    <Tool $w={44} aria-label="Multilevel list"><Multi /><Caret /></Tool>
                  </ToolSet>
                  <ToolSet>
                    <Tool $w={32} aria-label="Decrease indent"><IndentIcon /></Tool>
                    <Tool $w={32} aria-label="Increase indent"><IndentIcon more /></Tool>
                  </ToolSet>
                  <ToolSet><Tool $w={33} aria-label="Sort"><Sort /></Tool></ToolSet>
                  <ToolSet><Tool $w={33}><Glyph $size={24} $bold={false}>¶</Glyph></Tool></ToolSet>
                </ToolRow>
                <ToolRow>
                  <ToolSet>
                    <Tool $w={32} $on aria-label="Align left"><Align kind="l" /></Tool>
                    <Tool $w={35} aria-label="Center"><Align kind="c" /></Tool>
                    <Tool $w={35} aria-label="Align right"><Align kind="r" /></Tool>
                    <Tool $w={33} aria-label="Justify"><Align kind="j" /></Tool>
                  </ToolSet>
                  <ToolSet><Tool $w={45} aria-label="Line spacing"><Spacing /><Caret /></Tool></ToolSet>
                  <ToolSet>
                    <Tool $w={49} aria-label="Shading"><Bucket /><Caret /></Tool>
                    <Tool $w={49} aria-label="Borders"><Borders /><Caret /></Tool>
                  </ToolSet>
                </ToolRow>
              </Tools>
            </GroupBody>
            <Footer name="Paragraph" />
          </Group>

          <Group>
            <GroupBody>
              <Gallery>
                {styleItems.map((s, i) => (
                  <StyleItem key={s.n} $on={i === 0}>
                    <StyleCard>
                      <Sample $size={s.size} $color={s.color} $serif={s.serif} $bold={s.bold} $italic={s.italic}>{s.t}</Sample>
                      <StyleName>{s.n}</StyleName>
                    </StyleCard>
                  </StyleItem>
                ))}
                <GalleryScroll>
                  <GalleryArrow $off aria-label="Row up"><Caret up c="#a7a9ad" /></GalleryArrow>
                  <GalleryArrow aria-label="Row down"><Caret /></GalleryArrow>
                  <GalleryArrow aria-label="More styles"><svg width="10" height="11" viewBox="0 0 10 11"><path d="M0 1h10" stroke="#5b7fb8" strokeWidth="1.500" /><path d="M0 4.500h10L5 10z" fill="#5b7fb8" /></svg></GalleryArrow>
                </GalleryScroll>
              </Gallery>
              <ChangeStyles><ChangeIcon /><span>Change</span><Inline>Styles<Caret /></Inline></ChangeStyles>
            </GroupBody>
            <Footer name="Styles" />
          </Group>

          <Group $w={109}>
            <GroupBody>
              <Stack $inset={8}>
                <RowButton><FindIcon />Find<Caret /></RowButton>
                <RowButton><ReplaceIcon />Replace</RowButton>
                <RowButton><SelectIcon />Select<Caret /></RowButton>
              </Stack>
            </GroupBody>
            <Footer name="Editing" launcher={false} />
          </Group>
        </Ribbon>

        <RulerRow>
          <TabSelector aria-label="Tab type"><svg width="22" height="22" viewBox="0 0 22 22"><path d="M1 1h20v20H1z" fill="#d3e1f8" stroke="#6485c0" strokeWidth="1.600" /><path d="M8 9v7h7" fill="none" stroke="#333f5c" strokeWidth="3" /></svg></TabSelector>
          <RulerTrack>
            <HRuler>
              {marks(-10, 76)}
              <Indent $at="11.7%" $top={-6} width="14" height="34" viewBox="0 0 14 34"><path d="M1 1h12v5l-6 8-6-8zM7 14l6 6v5H1v-5zM1 26h12v7H1z" fill="#e8edf7" stroke="#70809f" strokeWidth="1.400" /></Indent>
              <Indent $at="88.1%" $top={5} width="14" height="15" viewBox="0 0 14 15"><path d="M7 1l6 7v6H1V8z" fill="#e8edf7" stroke="#70809f" strokeWidth="1.400" /></Indent>
            </HRuler>
            <TabTicks>{Array.from({ length: 12 }, (_, i) => <i key={i} />)}</TabTicks>
          </RulerTrack>
          <ScrollHead>
            <SplitHandle />
            <RulerToggle aria-label="View ruler"><svg width="19" height="20" viewBox="0 0 19 20"><path d="M5 5h13v10H7V9H2V3z" fill="#fff" stroke="#59617a" strokeWidth="1.300" /><path d="M1 1h8v5L5 8 1 5zM9 18v-4l3-3 3 3v4z" fill="#f3f5fa" stroke="#59617a" strokeWidth="1.300" /></svg></RulerToggle>
          </ScrollHead>
        </RulerRow>

        <Workspace>
          <VRulerPane><VRuler><span />{marks(-6, 44, true)}</VRuler></VRulerPane>
          <Canvas>
            <Swoosh width="320" height="180" viewBox="0 0 320 180">
              <path d="M0 0h320v38Q150 74 0 178z" fill="#9fbae4" />
              <path d="M0 0h320v36Q140 78 0 138z" fill="#b0c8ec" />
            </Swoosh>
            <Page>
              <DocHeading>DOUBLE LINKED LIST (TWO WAY LIST)</DocHeading>
              <Para>In a Double Linked List each node is connected with its next node as well as its previous node.</Para>
              <Para>Hence, each node consists of 3 fields –</Para>
              <Fields>
                <li>Data field</li>
                <li>Pointer field to point to the next node</li>
                <li>Pointer field to point to the previous node</li>
              </Fields>
              <NodeTitle>NODE</NodeTitle>
              <NodeTable>
                <tbody>
                  <tr><td>Previous</td><td>Data</td><td>Next</td></tr>
                  <tr><td>Pointer</td><td>Integer</td><td>Pointer</td></tr>
                </tbody>
              </NodeTable>
              <Dots>{Array.from({ length: 9 }, (_, i) => <Dot key={i} $faint={i === 1} />)}</Dots>
            </Page>
          </Canvas>
          <ScrollPane>
            <ScrollArrow aria-label="Scroll up"><svg width="14" height="8" viewBox="0 0 14 8"><path d="M0 8h14L7 0z" fill="#40588c" /></svg></ScrollArrow>
            <ScrollBefore />
            <ScrollThumb><svg width="12" height="12" viewBox="0 0 12 12"><path d="M0 1h12M0 4.500h12M0 8h12M0 11h12" stroke="#747f99" strokeWidth="1.300" /></svg></ScrollThumb>
            <ScrollAfter />
            <ScrollArrow aria-label="Scroll down"><svg width="14" height="8" viewBox="0 0 14 8"><path d="M0 0h14L7 8z" fill="#40588c" /></svg></ScrollArrow>
            <BrowseButtons>
              <button aria-label="Previous page"><PageJump /></button>
              <button aria-label="Browse object"><svg width="12" height="12" viewBox="0 0 12 12"><circle cx="6" cy="6" r="4.800" fill="#b9bcc0" stroke="#1c222e" strokeWidth="1.800" /></svg></button>
              <button aria-label="Next page"><PageJump down /></button>
            </BrowseButtons>
          </ScrollPane>
        </Workspace>

        <StatusBar>
          <StatusItem $w={114}>Page: 1 of 1</StatusItem>
          <StatusItem $w={104}>Words: 60</StatusItem>
          <StatusItem $w={247}><Proof />English (United States)</StatusItem>
          <StatusRight>
            <Views>
              {["Print layout", "Reading", "Web layout", "Outline", "Draft"].map((v, i) => (
                <View key={v} $on={i === 0} aria-label={v}><ViewIcon i={i} /></View>
              ))}
            </Views>
            <ZoomText>110%</ZoomText>
            <button aria-label="Zoom out"><ZoomIcon /></button>
            <ZoomSlider type="range" aria-label="Zoom" min={0} max={100} defaultValue={50} />
            <button aria-label="Zoom in"><ZoomIcon plus /></button>
          </StatusRight>
        </StatusBar>
      </AppWindow>
    </>
  );
}
